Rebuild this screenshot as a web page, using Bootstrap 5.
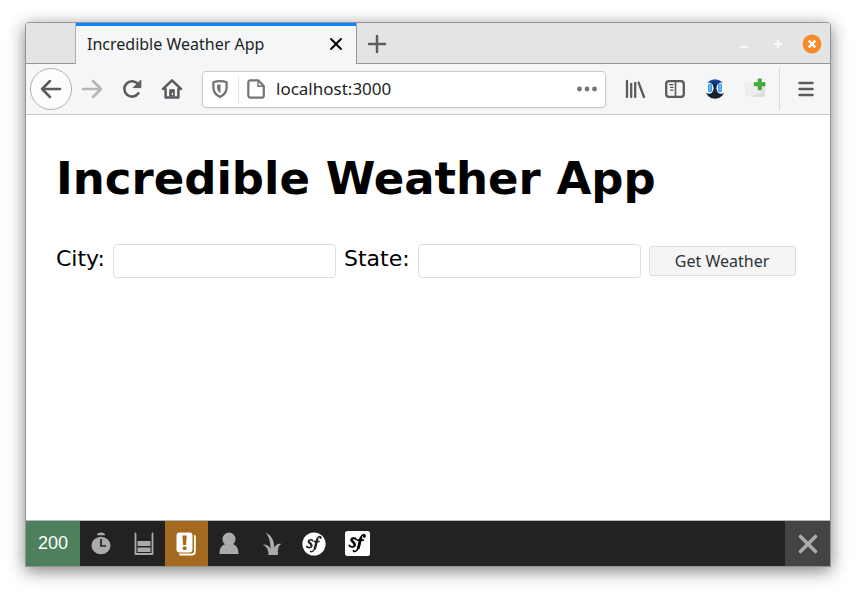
<!DOCTYPE html>
<html lang="en">
<head>
<meta charset="utf-8">
<meta name="viewport" content="width=device-width, initial-scale=1">
<title>Incredible Weather App</title>
<link href="https://cdn.jsdelivr.net/npm/bootstrap@5.3.0/dist/css/bootstrap.min.css" rel="stylesheet">
<style>
  body { font-family: "Noto Sans", sans-serif; background: #fff; color: #1d1f22; }
  .desktop { padding: 22px 25px 28px; }
  .window { border: 1px solid #949496; border-radius: 4px 4px 0 0; box-shadow: 0 4px 17px rgba(0,0,0,.5); overflow: hidden; background: #fff; }
  .tabs { height: 41px; background: #e3e4e6; }
  .tab-edge { border-bottom: 1px solid #949698; }
  .tab-lead { width: 50px; border-right: 1px solid #aeb0b2; }
  .tab-open { width: 280px; padding: 0 11px 2px; background: #f5f6f8; border-top: 3px solid #0a84ff; font-size: 16px; line-height: 24px; }
  .tab-rest { border-left: 1px solid #949698; padding: 1px 8px 0 10px; }
  .bare { border: 0; padding: 0; background: transparent; color: #5a5b5d; display: flex; align-items: center; justify-content: center; flex: none; }
  .wm { width: 20px; height: 20px; color: #f7f8f9; }
  .wm-gap { gap: 14px; }
  .toolbar { height: 51px; background: #f5f6f8; border-bottom: 1px solid #c9cacc; padding-left: 4px; }
  .tool { width: 40px; height: 40px; }
  .back { width: 42px; height: 42px; border: 1px solid #b1b2b4; border-radius: 50%; background: #fdfdfd; }
  .urlbar { height: 37px; margin: 0 9px 0 10px; padding: 0 8px; border: 1px solid #c9cacc; border-radius: 4px; background: #fff; box-shadow: 0 1px 3px rgba(0,0,0,.06); }
  .urlbar input { border: 0; outline: 0; min-width: 0; background: transparent; color: #1d1f22; font-size: 17px; padding: 0 0 0 11px; }
  .url-sep { width: 1px; height: 27px; background: #e1e1e2; margin: 0 8px 0 9px; }
  .menu-sep { border-left: 1px solid #d8d9db; height: 42px; width: 51px; margin-left: 4px; }
  .page { padding: 34px 30px; font-family: "DejaVu Sans", sans-serif; color: #000; }
  .page h1 { font-size: 45px; line-height: 60px; font-weight: 700; margin: 0 0 35px; }
  .page form { font-size: 22px; line-height: 30px; column-gap: 8px; row-gap: 12px; }
  .page label { padding-bottom: 4px; }
  .field { width: 223px; height: 34px; border: 1px solid #dedede; border-radius: 4px; padding: 0 8px; }
  .go { width: 147px; height: 30px; border: 1px solid #dedede; border-radius: 3px; background: #f5f5f5; color: #2e3436; font: 16px/24px "Noto Sans", sans-serif; padding: 0; }
  .debug { background: #222; border-top: 1px solid #b5b8b8; font-family: "Liberation Sans", sans-serif; }
  .debug-row { height: 45px; }
  .status { width: 54px; background: #4f805d; color: #fff; font-size: 18px; text-decoration: none; }
  .panels { width: 299px; }
  .panels a { color: #aaa; }
  .panels .alerted { background: #a46a1f; color: #fff; }
  .shut { width: 45px; background: #444; color: #aaa; }
</style>
<script src="https://cdn.jsdelivr.net/npm/bootstrap@5.3.0/dist/js/bootstrap.bundle.min.js"></script>
</head>
<body>
<div class="desktop min-vh-100 d-flex">
<div class="window flex-fill d-flex flex-column">
  <header>
    <div class="tabs d-flex">
      <div class="tab-lead tab-edge"></div>
      <div class="tab-open d-flex align-items-center justify-content-between">
        <span class="text-nowrap">Incredible Weather App</span>
        <button class="bare text-black" type="button" aria-label="Close tab"><svg width="18" height="18" viewBox="0 0 18 18" fill="none" stroke="currentColor" stroke-width="2" stroke-linecap="round"><path d="M4 4l10 10M14 4L4 14"/></svg></button>
      </div>
      <div class="tab-rest tab-edge flex-fill d-flex align-items-center justify-content-between">
        <button class="bare" type="button" aria-label="New tab"><svg width="20" height="20" viewBox="0 0 20 20" fill="none" stroke="currentColor" stroke-width="2.4" stroke-linecap="round"><path d="M10 2v16M2 10h16"/></svg></button>
        <div class="d-flex wm-gap">
          <button class="bare wm" type="button" aria-label="Minimize"><svg width="20" height="20" viewBox="0 0 20 20"><path d="M6 12h8v2H6z" fill="currentColor"/></svg></button>
          <button class="bare wm" type="button" aria-label="Maximize"><svg width="20" height="20" viewBox="0 0 20 20"><path d="M9 6h2v3h3v2h-3v3H9v-3H6V9h3z" fill="currentColor"/></svg></button>
          <button class="bare wm" type="button" aria-label="Close window"><svg width="20" height="20" viewBox="0 0 20 20"><circle cx="10" cy="10" r="9.4" fill="#f68b28"/><path d="M6.7 6.7l6.6 6.6M13.3 6.7l-6.6 6.6" stroke="#fff" stroke-width="2.4"/></svg></button>
        </div>
      </div>
    </div>
    <div class="toolbar d-flex align-items-center">
      <button class="bare back" type="button" aria-label="Back"><svg width="24" height="24" viewBox="0 0 24 24" fill="none" stroke="currentColor" stroke-width="2.5" stroke-linecap="round" stroke-linejoin="round"><path d="M21 12H3M11 4l-8 8 8 8"/></svg></button>
      <button class="bare tool" type="button" aria-label="Forward" disabled><svg width="24" height="24" viewBox="0 0 24 24" fill="none" stroke="#b5b6b8" stroke-width="2.5" stroke-linecap="round" stroke-linejoin="round"><path d="M3 12h18M13 4l8 8-8 8"/></svg></button>
      <button class="bare tool" type="button" aria-label="Reload"><svg width="24" height="24" viewBox="0 0 24 24" fill="none" stroke="currentColor" stroke-width="2.6" stroke-linecap="round"><path d="M18.4 16.3A7.7 7.7 0 1 1 18 7"/><path d="M20.800 3.400v7.200h-7.200z" fill="currentColor" stroke-width="1" stroke-linejoin="round"/></svg></button>
      <button class="bare tool" type="button" aria-label="Home"><svg width="24" height="24" viewBox="0 0 24 24" fill="none" stroke="currentColor" stroke-width="2.5" stroke-linecap="round" stroke-linejoin="round"><path d="M3 12l9-8.6 9 8.6M5.6 12v8.4h12.8V12"/><path d="M9.8 19v-6.2h4.4V19z" fill="currentColor" stroke-width="1.2"/><path d="M12.5 16v1.6" stroke="#f5f6f8" stroke-width="1.2"/></svg></button>
      <div class="urlbar flex-fill d-flex align-items-center">
        <svg class="flex-shrink-0" width="18" height="20" viewBox="0 0 18 20"><path d="M9 2.2c2.4 0 4.8.4 6.6 1.1v5.2c0 4.2-2.2 7.4-6.6 9.4-4.4-2-6.6-5.2-6.6-9.4V3.300C4.200 2.600 6.600 2.200 9 2.200z" fill="none" stroke="#737476" stroke-width="2.3" stroke-linejoin="round"/><path d="M9.500 5.600v8.600c-2-1.300-3.500-3-3.500-5.700V6c1-.3 2-.4 3.500-.4z" fill="#737476"/></svg>
        <span class="url-sep"></span>
        <svg class="flex-shrink-0" width="18" height="20" viewBox="0 0 18 20" fill="none" stroke="#737476" stroke-width="2.2" stroke-linejoin="round"><path d="M3.500 1.300h7.700L16.800 7v9.500a2.200 2.200 0 0 1-2.200 2.200H3.500a2.200 2.200 0 0 1-2.200-2.200v-13a2.200 2.200 0 0 1 2.200-2.200z"/><path d="M11 2v5.200h5.200" stroke-width="1.500"/></svg>
        <input class="flex-fill" type="text" value="localhost:3000" aria-label="Address">
        <button class="bare" type="button" aria-label="Page actions"><svg width="20" height="8" viewBox="0 0 20 8" fill="#737476"><circle cx="2.500" cy="4" r="2.400"/><circle cx="10" cy="4" r="2.400"/><circle cx="17.500" cy="4" r="2.400"/></svg></button>
      </div>
      <button class="bare tool" type="button" aria-label="Library"><svg width="22" height="22" viewBox="0 0 22 22" fill="none" stroke="currentColor" stroke-width="2.300" stroke-linecap="round"><path d="M3 3v16M7.200 6v13M11.200 5v14M14.600 4.600L20 19"/></svg></button>
      <button class="bare tool" type="button" aria-label="Sidebars"><svg width="22" height="22" viewBox="0 0 22 22" fill="none" stroke="currentColor"><rect x="2.200" y="3.200" width="17.600" height="15.600" rx="2.800" stroke-width="2.300"/><path d="M11.500 3.500v15" stroke-width="1.600"/><path d="M5 6.700h4.500M6 9.400h3.500M6 12.200h3.500" stroke-width="1.300"/></svg></button>
      <button class="bare tool" type="button" aria-label="Robot extension"><svg width="22" height="22" viewBox="0 0 22 22"><defs><linearGradient id="face" x2="0" y2="1"><stop offset="0" stop-color="#1454bd"/><stop offset=".28" stop-color="#142c55"/><stop offset="1" stop-color="#171c22"/></linearGradient></defs><circle cx="11" cy="11" r="9.800" fill="url(#face)"/><ellipse cx="4.900" cy="10.200" rx="4.600" ry="5.600" fill="#fff"/><ellipse cx="17.100" cy="10.200" rx="4.600" ry="5.600" fill="#fff"/><rect x="4" y="5.600" width="4" height="9" rx="2" fill="#3b9ffa"/><rect x="14" y="5.600" width="4" height="9" rx="2" fill="#3b9ffa"/><path d="M5.700 7.500v5M16.200 7.500v5" stroke="#7ed0ff" stroke-width="1.200"/></svg></button>
      <button class="bare tool" type="button" aria-label="Add note extension"><svg width="22" height="22" viewBox="0 0 22 22"><path d="M1 5h12v12H2z" fill="#f0f0f1" stroke="#e9e9ea"/><path d="M4 7h17v12H4z" fill="#dededf"/><path d="M4 7h13v8c-3 1-7 1-9 4H4z" fill="#eeeeef"/><path d="M14.200 1h3v3.700H21v3h-3.800v4h-3v-4h-3.900v-3h3.900z" fill="#43b53a" stroke="#248624" stroke-width=".7"/></svg></button>
      <div class="menu-sep d-flex align-items-center justify-content-center"><button class="bare" type="button" aria-label="Open menu"><svg width="20" height="20" viewBox="0 0 20 20" fill="none" stroke="currentColor" stroke-width="2.500" stroke-linecap="round"><path d="M4.500 4h13M4.500 10h13M4.500 16h13"/></svg></button></div>
    </div>
  </header>
  <main class="page flex-fill">
    <h1>Incredible Weather App</h1>
    <form class="d-flex flex-wrap align-items-center">
      <label for="city">City:</label>
      <input class="field" id="city" type="text">
      <label for="state">State:</label>
      <input class="field" id="state" type="text">
      <button class="go" type="button">Get Weather</button>
    </form>
  </main>
  <footer class="debug">
    <div class="debug-row d-flex">
      <a class="status d-flex align-items-center justify-content-center" href="#">200</a>
      <nav class="panels d-flex" aria-label="Profiler">
        <a class="flex-fill d-flex align-items-center justify-content-center" href="#" aria-label="Time"><svg width="24" height="24" viewBox="0 0 24 24" fill="currentColor"><path d="M8 3.300C8 1.300 9.300.5 12 .5s4 .8 4 2.800z"/><ellipse cx="12" cy="13.500" rx="9.500" ry="8.800"/><path d="M12 7v7h5" fill="none" stroke="#222" stroke-width="1.700"/></svg></a>
        <a class="flex-fill d-flex align-items-center justify-content-center" href="#" aria-label="Memory"><svg width="24" height="24" viewBox="0 0 24 24" fill="currentColor"><path d="M3.500 1.500v20.500h17V1.500" fill="none" stroke="currentColor" stroke-width="1.800" stroke-linecap="round" stroke-linejoin="round"/><path d="M5.500 9h13v5h-13zM5.500 15.500h13v4.500h-13z"/></svg></a>
        <a class="alerted flex-fill d-flex align-items-center justify-content-center" href="#" aria-label="Logs"><svg width="24" height="24" viewBox="0 0 24 24"><path d="M20.900 4v15.500a3 3 0 0 1-3 3H6" fill="none" stroke="currentColor" stroke-width="1.800" stroke-linecap="round"/><rect x="2.500" y=".5" width="16" height="20" rx="3" fill="currentColor"/><path d="M8.500 3.500h4.200l-.6 9.500h-3z" fill="#a46a1f"/><circle cx="10.600" cy="16.200" r="2" fill="#a46a1f"/></svg></a>
        <a class="flex-fill d-flex align-items-center justify-content-center" href="#" aria-label="Security"><svg width="24" height="24" viewBox="0 0 24 24" fill="currentColor"><path d="M12 .5a6.500 6.500 0 0 1 6.500 6.500c0 2.300-.9 4-2.500 5.300 3.700 1.300 5.500 4 5.500 9.700h-19c0-5.700 1.800-8.400 5.500-9.700C6.400 11 5.500 9.300 5.500 7A6.500 6.500 0 0 1 12 .5z"/></svg></a>
        <a class="flex-fill d-flex align-items-center justify-content-center" href="#" aria-label="Twig"><svg width="24" height="24" viewBox="0 0 24 24" fill="currentColor"><path d="M8.500 23c.2-4.800-1.600-8.200-5.500-10.500 3.800-.1 6.300 1.500 7.500 4.500C10.500 9.500 8.800 3.500 5 .5c6.300 2 9.300 8 9.500 15.500.9-3 3-4.700 7-4-3 1.500-3.800 4-3.500 11z"/></svg></a>
        <a class="flex-fill d-flex align-items-center justify-content-center" href="#" aria-label="Server"><svg width="24" height="24" viewBox="0 0 24 24"><circle cx="12" cy="12" r="11.600" fill="#fff"/><g fill="none" stroke="#222" stroke-linecap="round"><path d="M10.600 8.700c-.2-1.600-4.100-1.100-4.100.6 0 1.900 3.400 2.600 3.200 4.600-.2 2.200-4.300 2.200-5 .5" stroke-width="1.600"/><path d="M6.800 9.700c.7 1.500 2.500 2.100 2.700 3.700" stroke-width="2.200"/><path d="M18.900 5.600c-.3-1.700-2.400-1.500-3.400.8-1.200 3-1.600 7.300-3 10.700-.9 2.200-3 3.300-4 2.100M12.200 9.500h5" stroke-width="1.400"/><path d="M15.200 7.500c-1 3.200-1.300 6.100-2.400 9" stroke-width="2.400"/></g><circle cx="18.400" cy="6" r="1.100" fill="#222"/></svg></a>
        <a class="flex-fill d-flex align-items-center justify-content-center" href="#" aria-label="Framework version"><svg width="25" height="25" viewBox="0 0 25 25"><rect width="25" height="25" rx="2.500" fill="#fff"/><g fill="none" stroke="#000" stroke-linecap="round"><path d="M10.900 8.300c-.2-1.700-4.500-1.200-4.500.6 0 2.100 3.700 2.800 3.500 5-.2 2.500-4.700 2.500-5.500.6" stroke-width="1.900"/><path d="M6.700 9.300c.8 1.700 2.700 2.300 2.900 4" stroke-width="2.600"/><path d="M19.900 5c-.3-1.900-2.600-1.700-3.700.8-1.300 3.300-1.800 8-3.300 11.700-1 2.500-3.300 3.700-4.400 2.400M12.500 9.200h5.700" stroke-width="1.700"/><path d="M15.900 7c-1.100 3.500-1.400 6.700-2.600 9.900" stroke-width="2.800"/></g><circle cx="19.300" cy="5.400" r="1.300"/></svg></a>
      </nav>
      <button class="bare shut ms-auto" type="button" aria-label="Close toolbar"><svg width="22" height="22" viewBox="0 0 22 22" fill="none" stroke="currentColor" stroke-width="3.600" stroke-linecap="round"><path d="M3.500 3.500l15 15M18.500 3.500l-15 15"/></svg></button>
    </div>
  </footer>
</div>
</div>
</body>
</html>
